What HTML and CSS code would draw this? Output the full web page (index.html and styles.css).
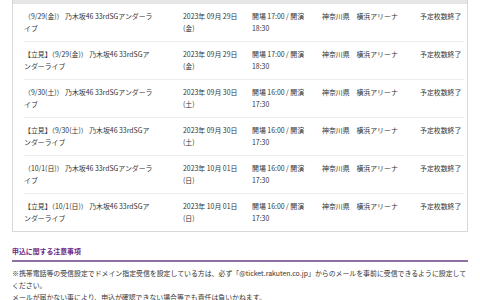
FILE: index.html
```html
<!DOCTYPE html>
<html lang="ja">
<head>
<meta charset="utf-8">
<link rel="stylesheet" href="styles.css">
</head>
<body>
<div class="page">
  <div class="box">
    <div class="box-head"></div>
    <table class="sched">
      <colgroup>
        <col class="c-name"><col class="c-date"><col class="c-time"><col class="c-place"><col class="c-stat">
      </colgroup>
      <tbody>
        <tr>
          <td class="name">（9/29(金)） 乃木坂46 33rdSGアンダーライブ</td>
          <td>2023年 09月 29日 (金)</td>
          <td>開場 17:00 / 開演 18:30</td>
          <td>神奈川県　横浜アリーナ</td>
          <td class="stat">予定枚数終了</td>
        </tr>
        <tr>
          <td class="name">【立見】（9/29(金)） 乃木坂46 33rdSGアンダーライブ</td>
          <td>2023年 09月 29日 (金)</td>
          <td>開場 17:00 / 開演 18:30</td>
          <td>神奈川県　横浜アリーナ</td>
          <td class="stat">予定枚数終了</td>
        </tr>
        <tr>
          <td class="name">（9/30(土)） 乃木坂46 33rdSGアンダーライブ</td>
          <td>2023年 09月 30日 (土)</td>
          <td>開場 16:00 / 開演 17:30</td>
          <td>神奈川県　横浜アリーナ</td>
          <td class="stat">予定枚数終了</td>
        </tr>
        <tr>
          <td class="name">【立見】（9/30(土)） 乃木坂46 33rdSGアンダーライブ</td>
          <td>2023年 09月 30日 (土)</td>
          <td>開場 16:00 / 開演 17:30</td>
          <td>神奈川県　横浜アリーナ</td>
          <td class="stat">予定枚数終了</td>
        </tr>
        <tr>
          <td class="name">（10/1(日)） 乃木坂46 33rdSGアンダーライブ</td>
          <td>2023年 10月 01日 (日)</td>
          <td>開場 16:00 / 開演 17:30</td>
          <td>神奈川県　横浜アリーナ</td>
          <td class="stat">予定枚数終了</td>
        </tr>
        <tr>
          <td class="name">【立見】（10/1(日)） 乃木坂46 33rdSGアンダーライブ</td>
          <td>2023年 10月 01日 (日)</td>
          <td>開場 16:00 / 開演 17:30</td>
          <td>神奈川県　横浜アリーナ</td>
          <td class="stat">予定枚数終了</td>
        </tr>
      </tbody>
    </table>
  </div>

  <h2 class="notes-title">申込に関する注意事項</h2>
  <div class="notes">
    <p>※携帯電話等の受信設定でドメイン指定受信を設定している方は、必ず「@ticket.rakuten.co.jp」からのメールを事前に受信できるように設定してください。</p>
    <p>メールが届かない事により、申込が確認できない場合等でも責任は負いかねます。</p>
  </div>
</div>
</body>
</html>
```

FILE: styles.css
```css
html, body {
  margin: 0;
  padding: 0;
  background: #fff;
}

body {
  font-family: "Noto Sans CJK JP", "Noto Sans", sans-serif;
  font-size: 6.9px;
  line-height: 12px;
  color: #333;
}

.page {
  padding: 0 12px;
}

.box {
  border: 1px solid #d8d8d8;
  border-top: none;
  padding: 0 4px 0 11px;
}

.box-head {
  height: 4px;
  background: #e6e6e6;
  margin: 0 -4px 0 -11px;
}

.sched {
  width: 440px;
  table-layout: fixed;
  border-collapse: collapse;
}

.c-name { width: 159px; }
.c-date { width: 69px; }
.c-time { width: 70px; }
.c-place { width: 98px; }
.c-stat { width: 44px; }

.sched td {
  vertical-align: top;
  padding: 6px 6px 7px 0;
}

.sched td.name {
  padding-right: 30px;
}

.sched td.stat {
  padding-right: 0;
  white-space: nowrap;
}

.sched tr {
  border-bottom: 1px solid #ececec;
}

.sched tr:last-child {
  border-bottom: none;
}

.notes-title {
  margin: 13px 0 0;
  font-size: 6.9px;
  line-height: 12px;
  font-weight: bold;
  color: #6b2a87;
  padding-bottom: 3px;
  border-bottom: 2px solid #8f6ea0;
}

.notes {
  padding-top: 5px;
}

.notes p {
  margin: 0;
  line-height: 12px;
}
```
